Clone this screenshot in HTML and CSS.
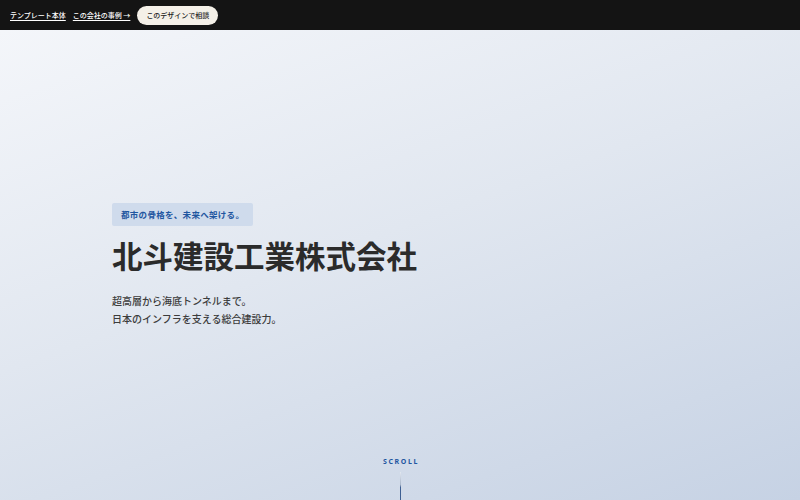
FILE: index.html
```html
<!DOCTYPE html>
<html lang="ja">
<head>
  <meta charset="UTF-8" />
  <meta name="viewport" content="width=device-width, initial-scale=1.0"/>
  <title>北斗建設工業株式会社</title>
  <link rel="stylesheet" href="styles.css">
</head>
<body>
  <div class="topbar">
    <a href="#" class="toplink">テンプレート本体</a>
    <a href="#" class="toplink">この会社の事例 →</a>
    <a href="#" class="consult">このデザインで相談</a>
  </div>

  <section class="hero">
    <div class="hero-inner">
      <div class="tag">都市の骨格を、未来へ架ける。</div>
      <h1 class="title">北斗建設工業株式会社</h1>
      <p class="lead">超高層から海底トンネルまで。<br>日本のインフラを支える総合建設力。</p>
    </div>
    <div class="scroll">
      <span>SCROLL</span>
      <div class="scroll-line"></div>
    </div>
  </section>
</body>
</html>
```

FILE: styles.css
```css
* { box-sizing: border-box; }
html, body {
  margin: 0;
  height: 100%;
}
body {
  font-family: "Noto Sans CJK JP", "Noto Sans", sans-serif;
  color: #2a2a2a;
  overflow: hidden;
}
.topbar {
  height: 30px;
  background: #141414;
  display: flex;
  align-items: center;
  gap: 7px;
  padding: 0 10px;
}
.toplink {
  color: #fff;
  font-size: 7px;
  font-weight: 500;
  text-decoration: underline;
  text-underline-offset: 2px;
}
.consult {
  background: #f4f0e8;
  color: #222;
  font-size: 7px;
  font-weight: 500;
  text-decoration: none;
  padding: 0 9px;
  height: 19px;
  line-height: 19px;
  border-radius: 10px;
}
.hero {
  height: 470px;
  background: linear-gradient(160deg, #f4f6fa 0%, #e1e7f0 45%, #c6d2e4 100%);
  display: flex;
  flex-direction: column;
  position: relative;
}
.hero-inner {
  padding: 169px 0 0 112px;
}
.tag {
  display: inline-block;
  background: #cfdbec;
  color: #1f56a0;
  font-size: 8.5px;
  font-weight: 700;
  letter-spacing: 0.3px;
  padding: 0 9px;
  height: 23px;
  line-height: 23px;
  border-radius: 2px;
}
.title {
  margin: 9px 0 0;
  font-size: 30.5px;
  font-weight: 700;
  line-height: 40px;
  color: #2b2b2b;
  letter-spacing: 0;
}
.lead {
  margin: 17px 0 0;
  font-size: 10px;
  font-weight: 500;
  line-height: 18px;
  color: #3c3c3c;
}
.scroll {
  margin-top: auto;
  display: flex;
  flex-direction: column;
  align-items: center;
}
.scroll span {
  font-family: "Noto Sans", sans-serif;
  font-size: 7px;
  font-weight: 700;
  letter-spacing: 1.6px;
  color: #1f56a0;
  margin-left: 2px;
}
.scroll-line {
  width: 1px;
  height: 28px;
  margin-top: 6px;
  background: linear-gradient(#e3e8f0 0%, #a9b6c9 45%, #3e5f92 55%, #3e5f92 100%);
}
```
